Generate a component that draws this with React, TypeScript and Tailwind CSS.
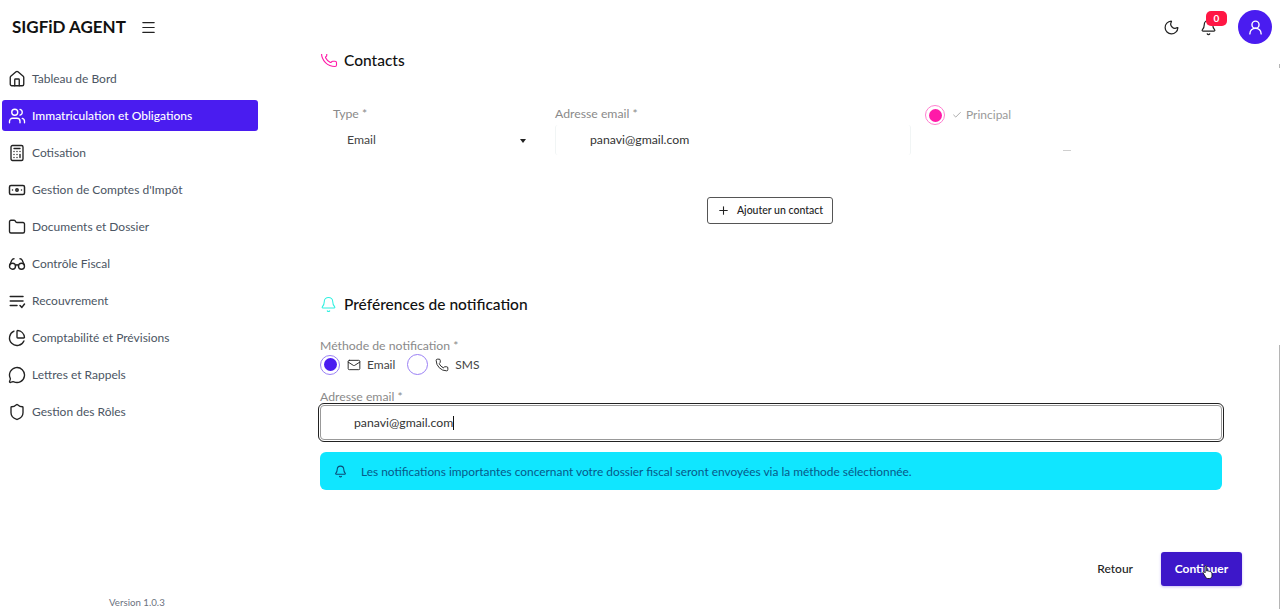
import {
  Bell,
  Calculator,
  Check,
  ChartPie,
  Folder,
  Glasses,
  House,
  Mail,
  Menu,
  MessageCircle,
  Moon,
  Phone,
  Plus,
  Shield,
  UserRound,
  Users,
} from "lucide-react";
import type { ComponentType } from "react";

function BanknoteIcon({ className }: { className?: string }) {
  return (
    <svg className={className} fill="none" viewBox="0 0 24 24" stroke="currentColor" strokeWidth="2">
      <rect x="2" y="6" width="20" height="12" rx="2" />
      <circle cx="12" cy="12" r="1.6" />
      <path d="M6 12h.01M18 12h.01" strokeLinecap="round" />
    </svg>
  );
}

function ListCheckIcon({ className }: { className?: string }) {
  return (
    <svg className={className} fill="none" viewBox="0 0 24 24" stroke="currentColor" strokeWidth="2" strokeLinecap="round" strokeLinejoin="round">
      <path d="M3 6h17M3 12h17M3 18h9M16 18l2.500 2.500L22 16" />
    </svg>
  );
}

const navItems: { label: string; icon: ComponentType<{ className?: string; strokeWidth?: number }>; active?: boolean }[] = [
  { label: "Tableau de Bord", icon: House },
  { label: "Immatriculation et Obligations", icon: Users, active: true },
  { label: "Cotisation", icon: Calculator },
  { label: "Gestion de Comptes d'Impôt", icon: BanknoteIcon },
  { label: "Documents et Dossier", icon: Folder },
  { label: "Contrôle Fiscal", icon: Glasses },
  { label: "Recouvrement", icon: ListCheckIcon },
  { label: "Comptabilité et Prévisions", icon: ChartPie },
  { label: "Lettres et Rappels", icon: MessageCircle },
  { label: "Gestion des Rôles", icon: Shield },
];

function Sidebar() {
  return (
    <aside className="flex w-[260px] shrink-0 flex-col pl-[2px] pt-[9px]">
      <nav className="flex flex-col gap-[6px]">
        {navItems.map((item) => (
          <a
            className={
              item.active
                ? "flex h-[31px] w-[256px] items-center gap-[6px] rounded-[3px] bg-[#4a1cf0] pl-[6px] text-[12px] font-medium text-white"
                : "flex h-[31px] w-[256px] items-center gap-[6px] pl-[6px] text-[12px] text-[#4b5563]"
            }
            href="#"
            key={item.label}
          >
            <item.icon className={item.active ? "size-[18px] text-white" : "size-[18px] text-[#222]"} strokeWidth={1.8} />
            <span>{item.label}</span>
          </a>
        ))}
      </nav>
      <div className="mt-auto pl-[107px] text-[9.700px] leading-[13px] text-[#6b7280]">Version 1.0.3</div>
    </aside>
  );
}

function ContactsSection() {
  return (
    <section className="-mt-[4px]">
      <div className="flex h-[20px] items-center gap-[6px] text-[15.500px] font-medium text-[#111]">
        <Phone className="mb-[2px] size-[18px] text-[#ff1aa8]" strokeWidth={1.5} />
        <span className="pt-[2px]">Contacts</span>
      </div>
      <div className="mt-[36px] flex pl-[13px]">
        <div className="w-[222px]">
          <div className="text-[12.250px] leading-[16px] text-[#8a8a8a]">Type *</div>
          <div className="mt-[3px] flex h-[30px] items-center justify-between pl-[14px] pr-[29px] text-[12.250px] text-[#444]">
            Email
            <span className="mt-[1px] border-x-[3.500px] border-t-[4px] border-x-transparent border-t-[#222]" />
          </div>
        </div>
        <div className="w-[356px]">
          <div className="text-[12.250px] leading-[16px] text-[#8a8a8a]">Adresse email *</div>
          <div className="mt-[3px] flex h-[30px] items-center rounded-[3px] border-x border-[#f1f5f5] pl-[34px] text-[12.250px] text-[#333]">
            panavi@gmail.com
          </div>
        </div>
        <div className="ml-[14px] w-[150px]">
          <div className="-mt-[1px] flex items-center gap-[7px]">
            <span className="flex size-[20px] items-center justify-center rounded-full border border-[#ff7fd0]">
              <span className="size-[13px] rounded-full bg-[#ff1aa8]" />
            </span>
            <span className="flex items-center gap-[4px] text-[12px] text-[#9a9a9a]">
              <Check className="size-[10px]" strokeWidth={2} />
              Principal
            </span>
          </div>
          <div className="ml-[138px] mt-[25px] h-px w-[8px] bg-[#cfcfcf]" />
        </div>
      </div>
      <div className="mt-[42px] flex justify-center pr-[2px]">
        <button className="flex h-[27px] w-[126px] items-center justify-center gap-[7px] rounded-[3px] border border-[#555] text-[10.500px] font-medium text-[#222]">
          <Plus className="size-[13px]" />
          Ajouter un contact
        </button>
      </div>
    </section>
  );
}

function NotificationSection() {
  return (
    <section className="mt-[68px]">
      <div className="flex h-[24px] items-center gap-[7px] text-[15.500px] font-medium text-[#111]">
        <Bell className="size-[17px] text-[#2ff0e0]" strokeWidth={1.5} />
        <span className="pt-[2px]">Préférences de notification</span>
      </div>
      <div className="mt-[21px] pt-[1px] text-[12.250px] leading-[16px] text-[#8a8a8a]">Méthode de notification *</div>
      <div className="flex items-center text-[12px] text-[#444]">
        <span className="flex size-[20px] items-center justify-center rounded-full border border-[#9a80f5]">
          <span className="size-[13px] rounded-full bg-[#4a1cf0]" />
        </span>
        <Mail className="ml-[7px] size-[14px] text-[#222]" strokeWidth={1.6} />
        <span className="ml-[6px]">Email</span>
        <span className="ml-[12px] size-[21px] rounded-full border border-[#9a80f5]" />
        <Phone className="ml-[7px] size-[14px] text-[#222]" strokeWidth={1.6} />
        <span className="ml-[6px]">SMS</span>
      </div>
      <div className="mb-[1px] mt-[14px] pt-[1px] text-[12.250px] leading-[14px] text-[#8a8a8a]">Adresse email *</div>
      <div className="flex h-[35px] items-center rounded-[4px] border border-[#999] pl-[33px] text-[12.250px] text-[#333] outline-[1.500px] outline-offset-[1px] outline-[#222]">
        <span className="pt-[2px]">panavi@gmail.com</span>
        <span className="h-[14px] w-px bg-[#111]" />
      </div>
      <div className="mt-[12px] flex h-[38px] items-center gap-[14px] rounded-[6px] bg-[#10e6ff] pl-[14px] text-[11.900px] text-[#07598a]">
        <Bell className="size-[13px] text-[#0b4a78]" />
        <span className="pt-[2px]">
          Les notifications importantes concernant votre dossier fiscal seront envoyées via la méthode sélectionnée.
        </span>
      </div>
    </section>
  );
}

export default function App() {
  return (
    <div className="relative flex h-[609px] w-[1280px] flex-col overflow-hidden bg-white font-['Lato',sans-serif]">
      <header className="relative z-10 flex h-[54px] shrink-0 items-center bg-white pl-[12px] pr-[8px]">
        <span className="text-[17px] font-bold text-[#111]">SIGFiD AGENT</span>
        <Menu className="ml-[14px] size-[17px] text-[#222]" strokeWidth={1.7} />
        <Moon className="ml-auto size-[17px] text-[#222]" strokeWidth={1.7} />
        <span className="relative ml-[20px] size-[17px]">
          <Bell className="size-[17px] text-[#222]" strokeWidth={1.7} />
          <span className="absolute -right-[10px] -top-[8px] flex h-[15px] w-[21px] items-center justify-center rounded-[5px] bg-[#ff1744] text-[10px] font-bold text-white">
            0
          </span>
        </span>
        <span className="ml-[21px] flex size-[34px] items-center justify-center rounded-full bg-[#4a1cf0]">
          <UserRound className="size-[17px] text-white" strokeWidth={2} />
        </span>
      </header>
      <div className="flex min-h-0 flex-1">
        <Sidebar />
        <main className="flex min-w-0 flex-1 flex-col pl-[60px] pr-[58px]">
          <ContactsSection />
          <NotificationSection />
          <div className="-mr-[20px] mt-[62px] flex items-center justify-end gap-[28px]">
            <button className="text-[12px] font-medium text-[#222]">Retour</button>
            <button className="h-[34px] w-[81px] rounded-[3px] bg-[#3d17c9] text-[12px] font-bold text-white shadow-[0_1px_3px_#c9bdf5]">
              Continuer
            </button>
          </div>
        </main>
      </div>
      {/* scrollbar + mouse cursor sit over the page */}
      <div className="absolute right-0 top-[64px] h-[4px] w-px bg-[#b5b5b5]" />
      <div className="absolute bottom-0 right-0 top-[345px] w-px bg-[#b5b5b5]" />
      <svg className="absolute left-[1202px] top-[563px] h-[18px] w-[13px]" viewBox="0 0 15 18">
        <path
          d="M4 1.500c.8 0 1.400.6 1.400 1.400v5l1-.3 1 .3 1 .2 1.600.6c1 .4 1.500 1.200 1.500 2.300v2.500c0 1.400-1 3-3 3H6.500c-1 0-1.700-.5-2.200-1.300L1.200 10c-.4-.7.6-1.900 1.600-1l.8.9V2.900c0-.8 0-1.400.4-1.400z"
          fill="#fff"
          stroke="#111"
          strokeWidth="1"
        />
      </svg>
    </div>
  );
}
